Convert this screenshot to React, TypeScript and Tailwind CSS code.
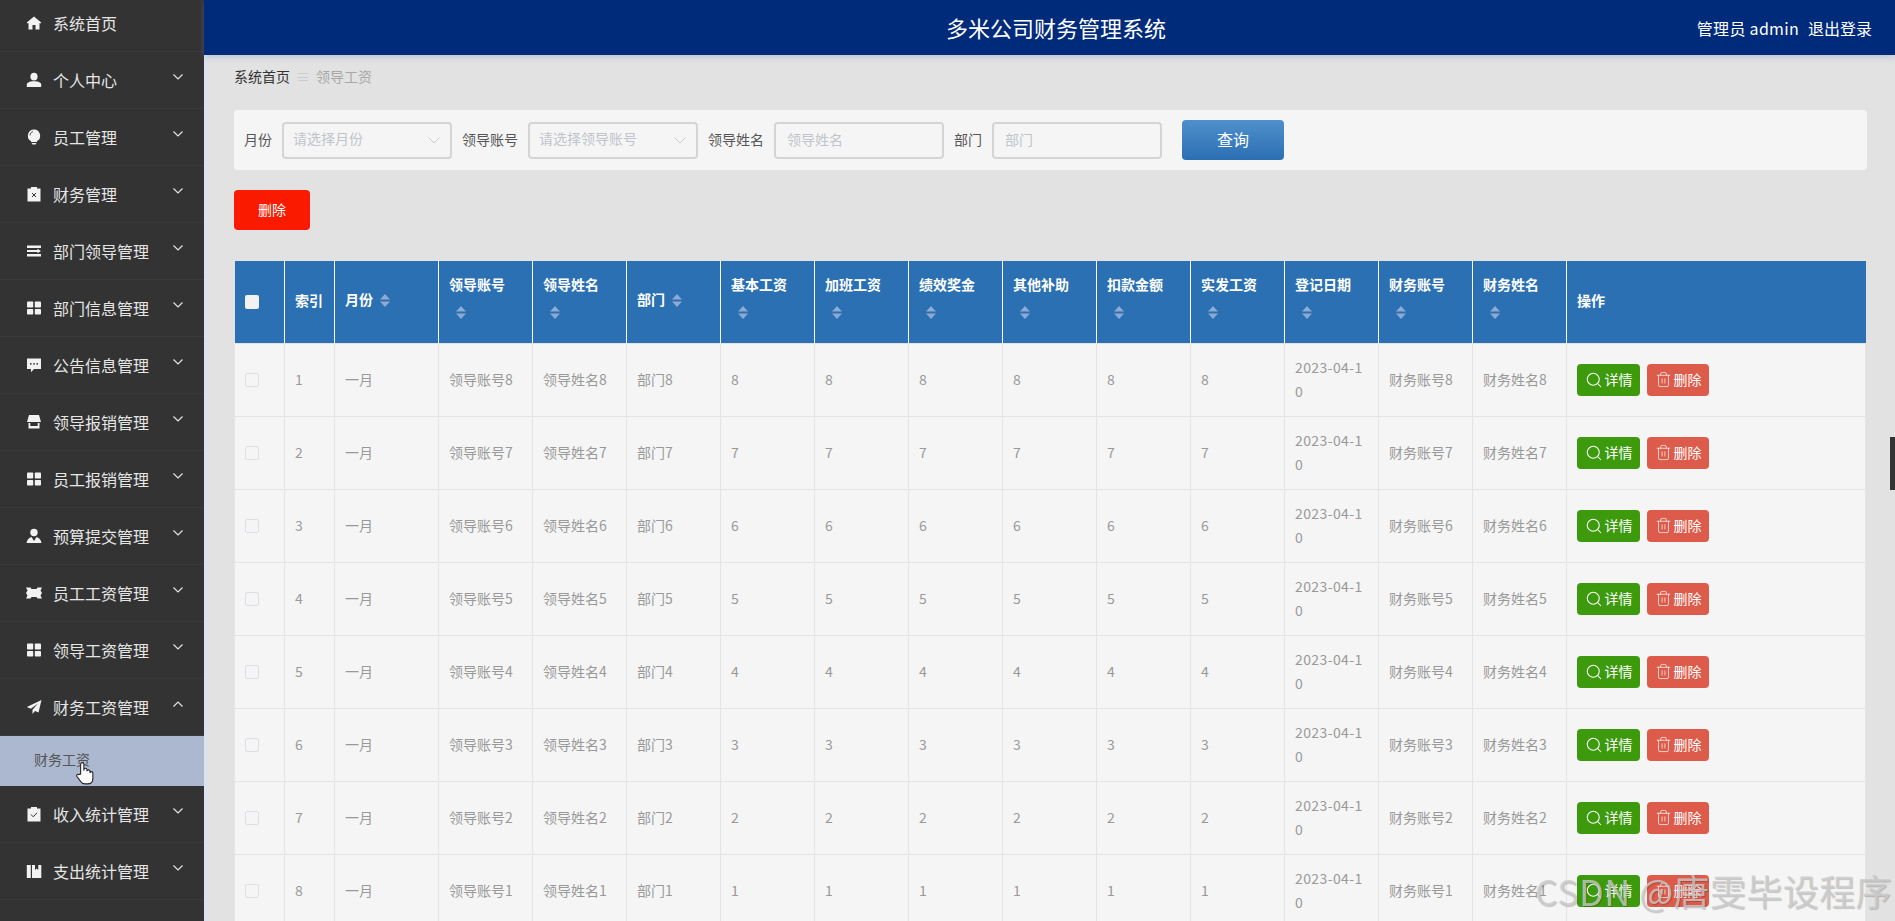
import { Search, Trash2 } from 'lucide-react'
import type { ReactNode } from 'react'

const icons: Record<string, ReactNode> = {
  home: <path d="M8 1.5 .8 7.6l.7.9L2.500 8v6.500h4V10h3v4.500h4V8l1 .5.7-.9z" />,
  user: (
    <>
      <ellipse cx="8" cy="4.600" rx="3.600" ry="3.900" />
      <path d="M.8 15v-2.400c0-2 2.600-3.300 7.200-3.300s7.200 1.300 7.200 3.300V15z" />
    </>
  ),
  bulb: (
    <>
      <path d="M8 .5a6.200 6.200 0 0 0-3 11.600V13h6v-.9A6.200 6.200 0 0 0 8 .5z" />
      <path d="M5.500 14h5l-1 1.500h-3z" />
      <path d="M4 6.500C4 4.500 5.400 3 7 2.600" fill="none" stroke="#333" strokeWidth=".8" />
    </>
  ),
  release: (
    <>
      <path d="M1.500 2.500H5V1h6v1.500h3.500V15.500h-13z" />
      <path d="m6 7 4 4M10 7l-4 4" stroke="#333" strokeWidth="1" />
    </>
  ),
  operation: (
    <>
      <rect x="1" y="2.500" width="14" height="2.500" />
      <path d="M1 7h10.500V5.800L15 8l-3.500 2.200V9H1z" />
      <rect x="1" y="11" width="14" height="2.500" />
    </>
  ),
  grid: (
    <>
      <rect x="1" y="1.500" width="6.200" height="6" rx=".8" />
      <rect x="8.800" y="1.500" width="6.200" height="6" rx=".8" />
      <rect x="1" y="9" width="6.200" height="5.500" rx=".8" />
      <rect x="8.800" y="9" width="6.200" height="5.500" rx=".8" />
    </>
  ),
  chat: (
    <>
      <path d="M1 1.500h14V12H8l-3 3.200V12H1z" />
      <circle cx="4.800" cy="6.800" r=".9" fill="#333" />
      <circle cx="8" cy="6.800" r=".9" fill="#333" />
      <circle cx="11.200" cy="6.800" r=".9" fill="#333" />
    </>
  ),
  shop: (
    <>
      <path d="M3 1h10l2 7H1z" />
      <path d="M2.500 9h1.800v3h7.400V9h1.800v5.500h-11z" />
    </>
  ),
  custom: (
    <>
      <circle cx="8" cy="4.500" r="3.700" />
      <path d="M.5 15c.5-3.500 2.500-5.500 5-6L8 13l2.500-4c2.500.5 4.500 2.500 5 6z" />
    </>
  ),
  ticket: <path d="M0 2.500h4.500L5.500 4h5l1-1.500H16l-1.500 3 1.500 2.500-1.500 2.500 1.500 3h-4.500l-1-1.500h-5l-1 1.500H0l1.500-3L0 8l1.500-2.500z" />,
  plane: <path d="M15.500 1 .8 8l4 1.800L12 4.500 6.500 10.800v4.200l2.500-3 3.500 1.500z" />,
  claim: (
    <>
      <path d="M1.500 2.500H5V1h6v1.500h3.500V15.500h-13z" />
      <path d="m5 8.500 2.200 2.300L11 6.800" fill="none" stroke="#333" strokeWidth="1" />
    </>
  ),
  book: <path d="M.8 2h4v13h-4zM6 2h3v5l1.700-1.500L12.300 7V2h3v13H6z" />,
}

type MenuItem = { label: string; icon: string; arrow?: boolean; open?: boolean }

const menu: MenuItem[] = [
  { label: '系统首页', icon: 'home' },
  { label: '个人中心', icon: 'user', arrow: true },
  { label: '员工管理', icon: 'bulb', arrow: true },
  { label: '财务管理', icon: 'release', arrow: true },
  { label: '部门领导管理', icon: 'operation', arrow: true },
  { label: '部门信息管理', icon: 'grid', arrow: true },
  { label: '公告信息管理', icon: 'chat', arrow: true },
  { label: '领导报销管理', icon: 'shop', arrow: true },
  { label: '员工报销管理', icon: 'grid', arrow: true },
  { label: '预算提交管理', icon: 'custom', arrow: true },
  { label: '员工工资管理', icon: 'ticket', arrow: true },
  { label: '领导工资管理', icon: 'grid', arrow: true },
  { label: '财务工资管理', icon: 'plane', arrow: true, open: true },
  { label: '收入统计管理', icon: 'claim', arrow: true },
  { label: '支出统计管理', icon: 'book', arrow: true },
]

const columns = [
  '领导账号',
  '领导姓名',
  '部门',
  '基本工资',
  '加班工资',
  '绩效奖金',
  '其他补助',
  '扣款金额',
  '实发工资',
  '登记日期',
  '财务账号',
  '财务姓名',
]

const rows = [8, 7, 6, 5, 4, 3, 2, 1]

function Chevron({ up }: { up?: boolean }) {
  return (
    <svg width="10" height="6" viewBox="0 0 10 6" fill="none" stroke="#e4e4e4" strokeWidth="1.2" className="ml-auto mr-[21px] -translate-y-[3px]">
      <path d={up ? 'M.5 5.500 5 1l4.500 4.500' : 'M.5 .5 5 5l4.500-4.500'} />
    </svg>
  )
}

function SortCaret() {
  return (
    <span className="inline-flex h-[34px] w-[24px] items-center justify-center align-middle">
      <svg width="10" height="13" viewBox="0 0 10 13" fill="#8eaad2">
        <path d="M5 0 10 5.500H0zM5 13 0 7.500h10z" />
      </svg>
    </span>
  )
}

function SelectBox({ placeholder }: { placeholder: string }) {
  return (
    <div className="flex h-[37px] w-[170px] items-center justify-between rounded border-2 border-[#d4d4d4] bg-[#f5f5f5] pl-[9px] pr-[10px] text-[#c0c4cc]">
      <span className="pb-[3px]">{placeholder}</span>
      <svg width="12" height="7" viewBox="0 0 12 7" fill="none" stroke="#c8ccd3" strokeWidth="1">
        <path d="M.5 .5 6 6l5.500-5.500" />
      </svg>
    </div>
  )
}

function TextBox({ placeholder }: { placeholder: string }) {
  return (
    <input
      placeholder={placeholder}
      className="h-[37px] w-[170px] rounded border-2 border-[#d4d4d4] bg-[#f5f5f5] pb-[3px] pl-[11px] placeholder:text-[#c0c4cc]"
    />
  )
}

export default function App() {
  return (
    <div className="relative flex h-screen overflow-hidden bg-[#e2e2e2] font-['Noto_Sans_CJK_SC',sans-serif] text-[14px]">
      <aside className="w-[204px] shrink-0 bg-[#333333] text-[16px] text-[#e6e6e6]">
        <div className="-mt-[5px]">
          {menu.map((item) => (
            <div key={item.label}>
              <div className="flex h-[57px] items-center border-b border-[#3a3a3a] pl-[26px]">
                <svg width="16" height="16" viewBox="0 0 16 16" fill="#f2f2f2" className="shrink-0">
                  {icons[item.icon]}
                </svg>
                <span className="ml-[11px]">{item.label}</span>
                {item.arrow && <Chevron up={item.open} />}
              </div>
              {item.open && (
                <div className="flex h-[50px] items-center bg-[#acb8d0] pb-[4px] pl-[34px] text-[14px] text-[#555555]">财务工资</div>
              )}
            </div>
          ))}
        </div>
      </aside>

      <div className="flex min-w-0 flex-1 flex-col border-l-[4px] border-[#dde3ec]">
        <header className="-ml-[4px] flex h-[55px] shrink-0 items-center bg-[#002a7a] pr-[23px] text-white shadow-[0_2px_6px_rgba(120,130,190,0.35)]">
          <div className="flex-1" />
          <h1 className="ml-[36px] text-[22px] font-normal">多米公司财务管理系统</h1>
          <div className="flex flex-1 justify-end gap-[9px] text-[16px]">
            <span className="tracking-[0.3px]">管理员 admin</span>
            <span>退出登录</span>
          </div>
        </header>

        <main className="flex-1 overflow-hidden pl-[26px] pr-[28px]">
          <div className="flex h-[55px] items-start pt-[11px]">
            <span className="text-[#333333]">系统首页</span>
            <span className="w-[26px] text-center text-[#cccccc]">≡</span>
            <span className="text-[#a8a8a8]">领导工资</span>
          </div>

          <div className="flex h-[60px] items-center gap-[10px] rounded bg-[#f5f5f5] px-[10px] text-[#555555]">
            <span className="pb-[2px]">月份</span>
            <SelectBox placeholder="请选择月份" />
            <span className="pb-[2px]">领导账号</span>
            <SelectBox placeholder="请选择领导账号" />
            <span className="pb-[2px]">领导姓名</span>
            <TextBox placeholder="领导姓名" />
            <span className="pb-[2px]">部门</span>
            <TextBox placeholder="部门" />
            <button className="ml-[10px] h-[40px] w-[102px] rounded bg-gradient-to-b from-[#4f8fcb] to-[#2b6fb3] pb-[2px] text-[16px] text-white">
              查询
            </button>
          </div>

          <button className="mt-[20px] block h-[40px] w-[76px] rounded bg-[#f91a00] pb-[2px] text-white">删除</button>

          <table className="mt-[31px] w-[1632px] table-fixed border-collapse text-[#999999]">
            <colgroup>
              <col className="w-[50px]" />
              <col className="w-[50px]" />
              <col className="w-[104px]" />
              {columns.map((c) => (
                <col key={c} className="w-[94px]" />
              ))}
              <col />
            </colgroup>
            <thead>
              <tr className="h-[82px] bg-[#2b70b2] text-left font-bold text-white">
                <th className="border-r border-white px-[10px]">
                  <div className="h-[14px] w-[14px] rounded-[2px] bg-[#f2f2f2]" />
                </th>
                <th className="border-r border-white px-[10px] pb-[2px]">索引</th>
                <th className="border-r border-white px-[10px] pb-[2px]">
                  月份
                  <SortCaret />
                </th>
                {columns.map((c) => (
                  <th key={c} className="border-r border-white px-[10px] pb-[2px] leading-[24px]">
                    {c}
                    <SortCaret />
                  </th>
                ))}
                <th className="px-[10px] pb-[2px]">操作</th>
              </tr>
            </thead>
            <tbody>
              {rows.map((n, i) => (
                <tr key={n} className="h-[73px] bg-[#f5f5f5]">
                  <td className="border border-[#e4e4e4] px-[10px]">
                    <div className="h-[14px] w-[14px] rounded-[2px] border border-[#dcdfe6]" />
                  </td>
                  <td className="border border-[#e4e4e4] px-[10px]">{i + 1}</td>
                  <td className="border border-[#e4e4e4] px-[10px]">一月</td>
                  <td className="border border-[#e4e4e4] px-[10px]">领导账号{n}</td>
                  <td className="border border-[#e4e4e4] px-[10px]">领导姓名{n}</td>
                  <td className="border border-[#e4e4e4] px-[10px]">部门{n}</td>
                  {[0, 1, 2, 3, 4, 5].map((k) => (
                    <td key={k} className="border border-[#e4e4e4] px-[10px]">
                      {n}
                    </td>
                  ))}
                  <td className="border border-[#e4e4e4] px-[10px] pb-[2px] leading-[24px] tracking-[0.4px] break-all">2023-04-10</td>
                  <td className="border border-[#e4e4e4] px-[10px]">财务账号{n}</td>
                  <td className="border border-[#e4e4e4] px-[10px]">财务姓名{n}</td>
                  <td className="border border-[#e4e4e4] px-[10px]">
                    <div className="flex gap-[7px] text-white">
                      <button className="flex h-[32px] w-[63px] items-center justify-center gap-[2px] rounded bg-[#3c9a0c]">
                        <Search size={18} strokeWidth={1.4} />
                        详情
                      </button>
                      <button className="flex h-[32px] w-[62px] items-center justify-center gap-[2px] rounded bg-[#dc5b4a]">
                        <Trash2 size={17} strokeWidth={1} />
                        删除
                      </button>
                    </div>
                  </td>
                </tr>
              ))}
            </tbody>
          </table>
        </main>
      </div>

      <div className="absolute right-0 top-[437px] h-[53px] w-[5px] bg-[#333333]" />

      <svg width="20" height="24" viewBox="0 0 18 22" fill="#ffffff" stroke="#222222" strokeWidth="1" className="absolute left-[75px] top-[761px]">
        <path d="M5 12V3a1.500 1.500 0 0 1 3 0v6V8a1.400 1.400 0 0 1 2.800 0v1.500a1.400 1.400 0 0 1 2.800 0V11a1.300 1.300 0 0 1 2.600 0v5c0 3-2 5-5 5H9c-2 0-3.200-1-4.200-2.500L1.500 14c-.8-1.200.8-2.500 1.800-1.500z" />
      </svg>

      <div className="absolute right-[3px] top-[863px] text-[36px] tracking-[0.4px] whitespace-nowrap text-[#cccccc]/80 [text-shadow:1px_1px_1px_rgba(0,0,0,0.2)]">
        CSDN @唐雯毕设程序
      </div>
    </div>
  )
}
